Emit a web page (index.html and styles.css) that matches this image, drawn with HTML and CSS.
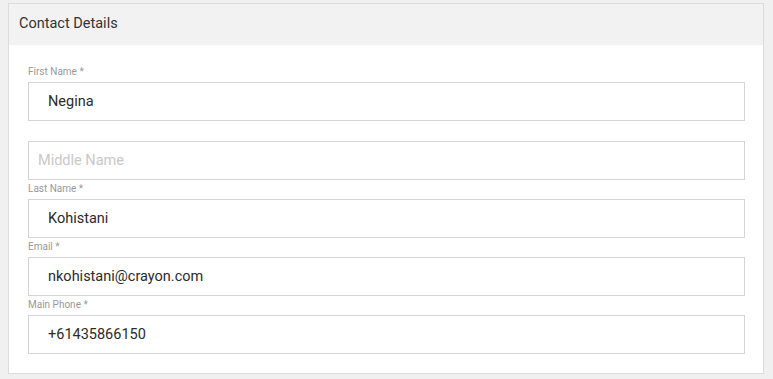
FILE: index.html
```html
<!DOCTYPE html>
<html lang="en">
<head>
    <meta charset="UTF-8">
    <meta name="viewport" content="width=device-width, initial-scale=1.0">
    <title>Contact Details</title>
    <link rel="stylesheet" href="styles.css">
</head>
<body>
    <div class="panel">
        <div class="panel-header">Contact Details</div>

        <form class="panel-body" id="contact-form">
            <div class="field">
                <label for="first-name">First Name *</label>
                <input type="text" id="first-name" class="filled" value="Negina">
            </div>
            <div class="field no-label">
                <label for="middle-name"></label>
                <input type="text" id="middle-name" placeholder="Middle Name">
            </div>
            <div class="field">
                <label for="last-name">Last Name *</label>
                <input type="text" id="last-name" class="filled" value="Kohistani">
            </div>
            <div class="field">
                <label for="email">Email *</label>
                <input type="email" id="email" class="filled" value="nkohistani@crayon.com">
            </div>
            <div class="field">
                <label for="phone">Main Phone *</label>
                <input type="tel" id="phone" class="filled" value="+61435866150">
            </div>
        </form>
    </div>
</body>
</html>
```

FILE: styles.css
```css
body {
    font-family: Roboto, "Liberation Sans", sans-serif;
    background-color: #f0f0f0;
    margin: 0;
    padding: 3px 9px 5px 8px;
    color: #2b2b2b;
}
.panel {
    background-color: white;
    border: 1px solid #dcdcdc;
}
.panel-header {
    background-color: #f2f2f2;
    height: 41px;
    line-height: 40px;
    padding: 0 10px;
    font-size: 14.5px;
    color: #333;
}
.panel-body {
    padding: 18px 18px 19px 19px;
    margin: 0;
}
.field label {
    display: block;
    height: 19px;
    line-height: 18px;
    font-size: 10px;
    color: #999;
}
.field.no-label label {
    height: 20px;
}
.field input {
    display: block;
    width: 100%;
    height: 39px;
    box-sizing: border-box;
    border: 1px solid #d4d4d4;
    border-radius: 0;
    padding: 0 9px;
    font-family: inherit;
    font-size: 14.5px;
    color: #2b2b2b;
    outline: none;
}
.field input.filled {
    padding-left: 19px;
}
.field input::placeholder {
    color: #c8c8c8;
}
```
